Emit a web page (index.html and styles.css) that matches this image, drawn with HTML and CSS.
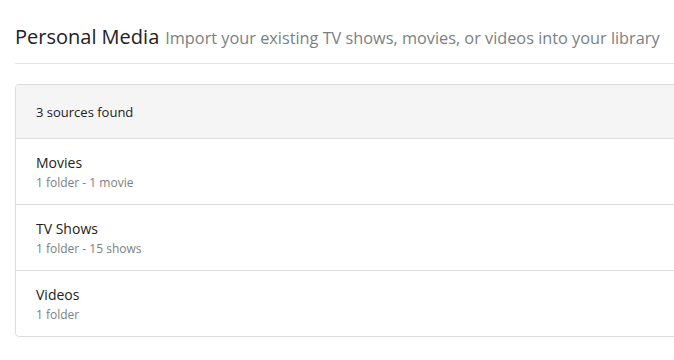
FILE: index.html
```html
<!DOCTYPE html>
<html>
<head>
<meta charset="utf-8">
<link rel="stylesheet" href="styles.css">
</head>
<body>
<div class="page">
  <div class="page-header">
    <span class="title">Personal Media</span>
    <span class="subtitle">Import your existing TV shows, movies, or videos into your library</span>
  </div>
  <div class="card">
    <div class="card-head">3 sources found</div>
    <div class="row">
      <div class="row-title">Movies</div>
      <div class="row-meta">1 folder - 1 movie</div>
    </div>
    <div class="row">
      <div class="row-title">TV Shows</div>
      <div class="row-meta">1 folder - 15 shows</div>
    </div>
    <div class="row">
      <div class="row-title">Videos</div>
      <div class="row-meta">1 folder</div>
    </div>
  </div>
</div>
</body>
</html>
```
FILE: styles.css
```css
html, body {
  margin: 0;
  padding: 0;
  background: #fff;
  overflow: hidden;
}
body {
  font-family: "Open Sans", "Noto Sans", sans-serif;
  color: #222;
  width: 674px;
  height: 360px;
}
.page {
  width: 740px;
  padding: 23px 0 0 15px;
}
.page-header {
  display: flex;
  align-items: baseline;
  gap: 6px;
  padding-bottom: 13px;
  border-bottom: 1px solid #e6e6e6;
  margin-bottom: 20px;
  white-space: nowrap;
}
.title {
  font-size: 20px;
  color: #222;
}
.subtitle {
  font-size: 16.3px;
  color: #7a7f85;
}
.card {
  border: 1px solid #ddd;
  border-radius: 4px;
}
.card-head {
  background: #f5f5f5;
  height: 53px;
  display: flex;
  align-items: center;
  padding-left: 20px;
  font-size: 13px;
  color: #222;
  border-bottom: 1px solid #ddd;
  border-radius: 4px 4px 0 0;
}
.row {
  height: 65px;
  padding-left: 20px;
  display: flex;
  flex-direction: column;
  justify-content: center;
  border-bottom: 1px solid #ddd;
}
.row:last-child {
  border-bottom: none;
}
.row-title {
  font-size: 14px;
  color: #222;
  line-height: 21px;
}
.row-meta {
  font-size: 12px;
  color: #7a7f85;
  line-height: 19px;
}
```
